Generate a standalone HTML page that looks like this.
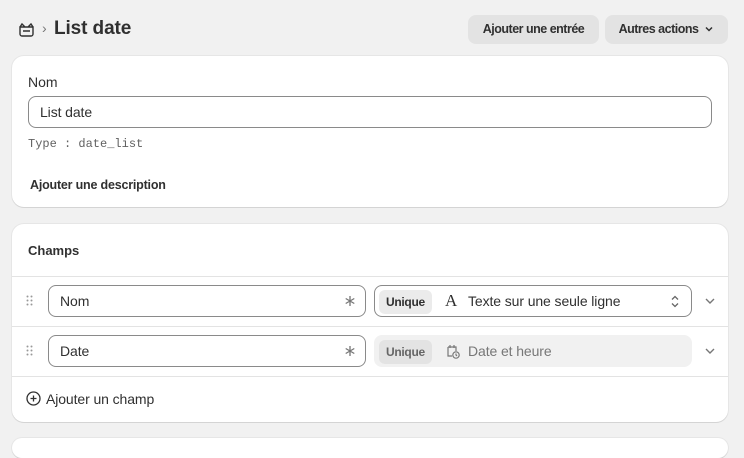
<!DOCTYPE html>
<html><head><meta charset="utf-8"><style>
*{box-sizing:border-box;margin:0;padding:0}
body{width:744px;height:441px;overflow:hidden;background:#f1f1f1;font-family:"Liberation Sans",sans-serif;color:#303030;position:relative;font-size:13px}
.abs{position:absolute;white-space:nowrap}
.card{position:absolute;background:#fff;border-radius:12px;box-shadow:0 1px 0 #d4d4d4,0 0 0 1px #e6e6e6}
.btn{position:absolute;top:15px;height:29px;background:#e3e3e3;border-radius:8px;font-size:12.5px;font-weight:bold;line-height:29px;text-align:center;color:#303030;white-space:nowrap;letter-spacing:-0.5px}
.inp{position:absolute;border:1px solid #8a8a8a;border-radius:8px;height:32px;line-height:30px;padding-left:11px;font-size:14px;letter-spacing:-0.1px}
.hr{position:absolute;left:12px;width:716px;height:1px;background:#e3e3e3}
.badge{position:absolute;top:4px;left:4px;height:24px;line-height:24px;background:#ebebeb;border-radius:6px;padding:0 7px;font-size:12px;font-weight:bold;letter-spacing:-0.3px}
</style></head><body>
<svg class="abs" style="left:18px;top:22px" width="17" height="16" viewBox="0 0 17 16" fill="none" stroke="#303030" stroke-width="1.4"><path d="M2 5h13v7a2 2 0 0 1-2 2H4a2 2 0 0 1-2-2z M2 5l2-3 3 3 M15 5l-2-3-3 3 M5 9h7"/></svg>
<div class="abs" style="left:42px;top:20px;font-size:14px;color:#777">›</div>
<div class="abs" style="left:54px;top:18px;font-size:19px;font-weight:bold;color:#303030;letter-spacing:-0.1px">List date</div>
<div class="btn" style="left:468px;width:131px">Ajouter une entrée</div>
<div class="btn" style="left:605px;width:123px">Autres actions <svg width="10" height="10" viewBox="0 0 10 10" style="vertical-align:-1px;margin-left:3px" fill="none" stroke="#303030" stroke-width="1.5"><path d="M2 3.5l3 3 3-3"/></svg></div>

<div class="card" style="left:12px;top:56px;width:716px;height:151px">
 <div class="abs" style="left:16px;top:18px;font-size:14px">Nom</div>
 <div class="inp" style="left:16px;top:40px;width:684px">List date</div>
 <div class="abs" style="left:16px;top:81px;font-family:'Liberation Mono',monospace;font-size:12px;color:#616161">Type : date_list</div>
 <div class="abs" style="left:18px;top:122px;font-size:12.5px;font-weight:bold;letter-spacing:-0.2px">Ajouter une description</div>
</div>

<div class="card" style="left:12px;top:224px;width:716px;height:198px">
 <div class="abs" style="left:16px;top:19px;font-size:13px;font-weight:bold">Champs</div>
</div>
<div class="hr" style="top:276px"></div>
<div class="hr" style="top:326px"></div>
<div class="hr" style="top:376px"></div>
<svg class="abs" style="left:26px;top:295px" width="8" height="12" viewBox="0 0 8 12" fill="#999"><circle cx="1.5" cy="1.5" r="1"/><circle cx="5.5" cy="1.5" r="1"/><circle cx="1.5" cy="5.5" r="1"/><circle cx="5.5" cy="5.5" r="1"/><circle cx="1.5" cy="9.5" r="1"/><circle cx="5.5" cy="9.5" r="1"/></svg>
<svg class="abs" style="left:26px;top:345px" width="8" height="12" viewBox="0 0 8 12" fill="#999"><circle cx="1.5" cy="1.5" r="1"/><circle cx="5.5" cy="1.5" r="1"/><circle cx="1.5" cy="5.5" r="1"/><circle cx="5.5" cy="5.5" r="1"/><circle cx="1.5" cy="9.5" r="1"/><circle cx="5.5" cy="9.5" r="1"/></svg>
<div class="inp" style="left:48px;top:285px;width:318px">Nom<svg style="position:absolute;right:10px;top:10px" width="10" height="10" viewBox="0 0 10 10" stroke="#777" stroke-width="1.3"><path d="M5 0v10M0.7 2.5l8.6 5M0.7 7.5l8.6-5"/></svg></div>
<div class="inp" style="left:48px;top:335px;width:318px">Date<svg style="position:absolute;right:10px;top:10px" width="10" height="10" viewBox="0 0 10 10" stroke="#777" stroke-width="1.3"><path d="M5 0v10M0.7 2.5l8.6 5M0.7 7.5l8.6-5"/></svg></div>
<div class="inp" style="left:374px;top:285px;width:318px;padding-left:0"><div class="badge">Unique</div><span class="abs" style="left:70px;top:0;font-family:'Liberation Serif',serif;font-size:17px">A</span><span class="abs" style="left:93px;top:0">Texte sur une seule ligne</span><svg class="abs" style="right:12px;top:9px" width="8" height="13" viewBox="0 0 8 13" fill="none" stroke="#666" stroke-width="1.3"><path d="M1 4.5l3-3 3 3M1 8.5l3 3 3-3"/></svg></div>
<div class="inp" style="left:374px;top:335px;width:318px;padding-left:0;border-color:#f1f1f1;background:#f1f1f1;color:#777"><div class="badge" style="background:#e3e3e3;color:#666">Unique</div><svg class="abs" style="left:70px;top:8px" width="16" height="16" viewBox="0 0 16 16" fill="none" stroke="#777" stroke-width="1.2"><path d="M3 3h8v4 M3 3v9h4 M5 1v3 M9 1v3"/><circle cx="11" cy="11" r="3.2"/><path d="M11 9.5V11l1 1"/></svg><span class="abs" style="left:93px;top:0">Date et heure</span></div>
<svg class="abs" style="left:704px;top:297px" width="12" height="8" viewBox="0 0 12 8" fill="none" stroke="#777" stroke-width="1.4"><path d="M2 2l4 4 4-4"/></svg>
<svg class="abs" style="left:704px;top:347px" width="12" height="8" viewBox="0 0 12 8" fill="none" stroke="#777" stroke-width="1.4"><path d="M2 2l4 4 4-4"/></svg>
<svg class="abs" style="left:26px;top:391px" width="15" height="15" viewBox="0 0 15 15" fill="none" stroke="#303030" stroke-width="1.3"><circle cx="7.5" cy="7.5" r="6.5"/><path d="M7.5 4.5v6M4.5 7.5h6"/></svg>
<div class="abs" style="left:46px;top:391px;font-size:14px;letter-spacing:-0.1px">Ajouter un champ</div>
<div class="card" style="left:12px;top:438px;width:716px;height:20px"></div>
</body></html>
